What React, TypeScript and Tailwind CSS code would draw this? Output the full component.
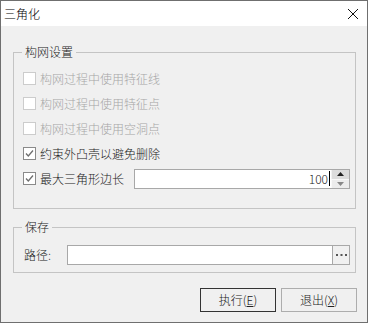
import React from "react";

const font = { fontFamily: '"Noto Sans CJK SC", "Noto Sans", sans-serif' };

function Check({ checked, disabled }: { checked?: boolean; disabled?: boolean }) {
  return (
    <div
      className={`w-[13px] h-[13px] border bg-white flex items-center justify-center shrink-0 ${
        disabled ? "border-[#cccccc]" : "border-[#8a8a8a]"
      }`}
    >
      {checked && (
        <svg width="11" height="11" viewBox="0 0 11 11">
          <path d="M2 5.5 L4.3 8 L9 2.5" fill="none" stroke="#6e6e6e" strokeWidth="1.3" />
        </svg>
      )}
    </div>
  );
}

function Row({ label, checked, disabled, children }: { label: string; checked?: boolean; disabled?: boolean; children?: React.ReactNode }) {
  return (
    <div className="h-[25px] flex items-center">
      <Check checked={checked} disabled={disabled} />
      <span className={`ml-[4px] text-[12px] leading-[16px] font-light ${disabled ? "text-[#a6a6a6]" : "text-[#222222]"}`}>{label}</span>
      {children}
    </div>
  );
}

export default function App() {
  return (
    <div className="w-[369px] h-[324px] bg-white" style={font}>
      <div className="w-[368px] h-[323px] border border-[#6f6f6f] bg-[#f0f0f0] flex flex-col">
        <div className="h-[25px] bg-white flex items-center justify-between pl-[3px] pr-[8px] shrink-0">
          <span className="text-[12px] leading-[16px] text-black font-light">三角化</span>
          <svg width="12" height="12" viewBox="0 0 12 12">
            <path d="M1 1 L11 11 M11 1 L1 11" stroke="#111" strokeWidth="1" />
          </svg>
        </div>
        <div className="flex flex-col pl-[12px] pr-[11px]">
          <div className="relative mt-[26px] h-[157px] border border-[#c4c4c4] pt-[13px] pl-[9px]">
            <span className="absolute -top-[9px] left-[8px] px-[3px] bg-[#f0f0f0] text-[12px] leading-[16px] text-[#222222] font-light">构网设置</span>
            <Row label="构网过程中使用特征线" disabled />
            <Row label="构网过程中使用特征点" disabled />
            <Row label="构网过程中使用空洞点" disabled />
            <Row label="约束外凸壳以避免删除" checked />
            <Row label="最大三角形边长" checked>
              <div className="ml-[10px] w-[216px] h-[20px] border border-[#a8a8a8] bg-white flex">
                <div className="flex-1 flex items-center justify-end pr-[1px]">
                  <span className="text-[12px] leading-[16px] text-[#222222] font-light">100</span>
                  <div className="w-[1px] h-[15px] bg-black ml-[1px]" />
                </div>
                <div className="w-[18px] flex flex-col">
                  <div className="h-[9px] bg-[#dcdcdc] border-l border-[#f0f0f0] flex items-center justify-center">
                    <svg width="7" height="4" viewBox="0 0 7 4"><path d="M0 4 L3.5 0 L7 4 Z" fill="#222" /></svg>
                  </div>
                  <div className="h-[9px] bg-[#ececec] border-l border-t border-[#f8f8f8] flex items-center justify-center">
                    <svg width="7" height="4" viewBox="0 0 7 4"><path d="M0 0 L3.5 4 L7 0 Z" fill="#888" /></svg>
                  </div>
                </div>
              </div>
            </Row>
          </div>
          <div className="relative mt-[18px] h-[46px] border border-[#c4c4c4] pl-[10px] pt-[17px]">
            <span className="absolute -top-[9px] left-[8px] px-[3px] bg-[#f0f0f0] text-[12px] leading-[16px] text-[#222222] font-light">保存</span>
            <div className="flex items-center">
              <span className="text-[12px] leading-[16px] text-[#222222] w-[43px] font-light">路径:</span>
              <div className="w-[283px] h-[20px] border border-[#a8a8a8] bg-white flex justify-end">
                <div className="w-[17px] h-full border-l border-[#a8a8a8] bg-[#f0f0f0] flex items-center justify-center">
                  <svg width="11" height="2" viewBox="0 0 11 2">
                    <rect x="0" y="0" width="2" height="2" fill="#555" />
                    <rect x="4.5" y="0" width="2" height="2" fill="#555" />
                    <rect x="9" y="0" width="2" height="2" fill="#555" />
                  </svg>
                </div>
              </div>
            </div>
          </div>
          <div className="mt-[15px] flex justify-end gap-[5px] -mr-[1px]">
            <button className="w-[76px] h-[24px] border border-[#333333] bg-[#f0f0f0] text-[12px] leading-[16px] text-[#222222] font-light">
              执行(<span className="underline">E</span>)
            </button>
            <button className="w-[76px] h-[24px] border border-[#adadad] bg-[#f0f0f0] text-[12px] leading-[16px] text-[#222222] font-light">
              退出(<span className="underline">X</span>)
            </button>
          </div>
        </div>
      </div>
    </div>
  );
}
